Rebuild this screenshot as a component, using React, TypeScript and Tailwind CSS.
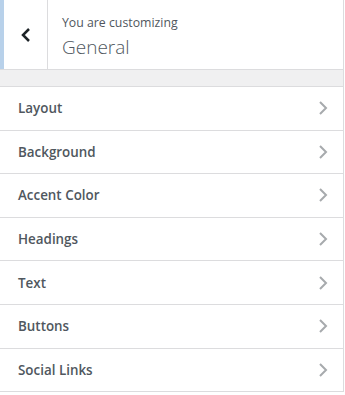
const sections = ['Layout', 'Background', 'Accent Color', 'Headings', 'Text', 'Buttons', 'Social Links'];

function Chevron({ className }: { className?: string }) {
  return (
    <svg viewBox="0 0 20 20" className={className} fill="none" stroke="currentColor" strokeWidth={2}>
      <path d="M7 4 L13 10 L7 16" />
    </svg>
  );
}

export default function App() {
  return (
    <div className="w-[345px] h-[395px] bg-white font-['Open_Sans',sans-serif] text-[#50575e]">
      <div className="w-[344px] border-r border-[#dcdcde]">
        <div className="flex h-[70px] border-b border-[#dcdcde] bg-white">
          <div className="w-[4px] bg-[#b8d1ea]" />
          <button className="flex w-[44px] items-center justify-center border-r border-[#dcdcde] bg-white text-[#1d2327]">
            <svg viewBox="0 0 20 20" className="h-[20px] w-[20px]" fill="none" stroke="currentColor" strokeWidth={2.5}>
              <path d="M13 4 L7 10 L13 16" />
            </svg>
          </button>
          <div className="flex flex-col justify-center pl-[14px] pt-[3px]">
            <span className="text-[12.3px] leading-[18px]">You are customizing</span>
            <span className="mt-[3px] text-[19px] font-light leading-[24px]">General</span>
          </div>
        </div>
        <div className="h-[17px] border-b border-[#dcdcde] bg-[#f0f0f1]" />
        <ul>
          {sections.map((s) => (
            <li
              key={s}
              className="flex h-[43.6px] items-center justify-between border-b border-[#dcdcde] pl-[18px] pr-[10px]"
            >
              <span className="text-[13.4px] font-semibold">{s}</span>
              <Chevron className="h-[20px] w-[20px] text-[#a7aaad]" />
            </li>
          ))}
        </ul>
      </div>
    </div>
  );
}
